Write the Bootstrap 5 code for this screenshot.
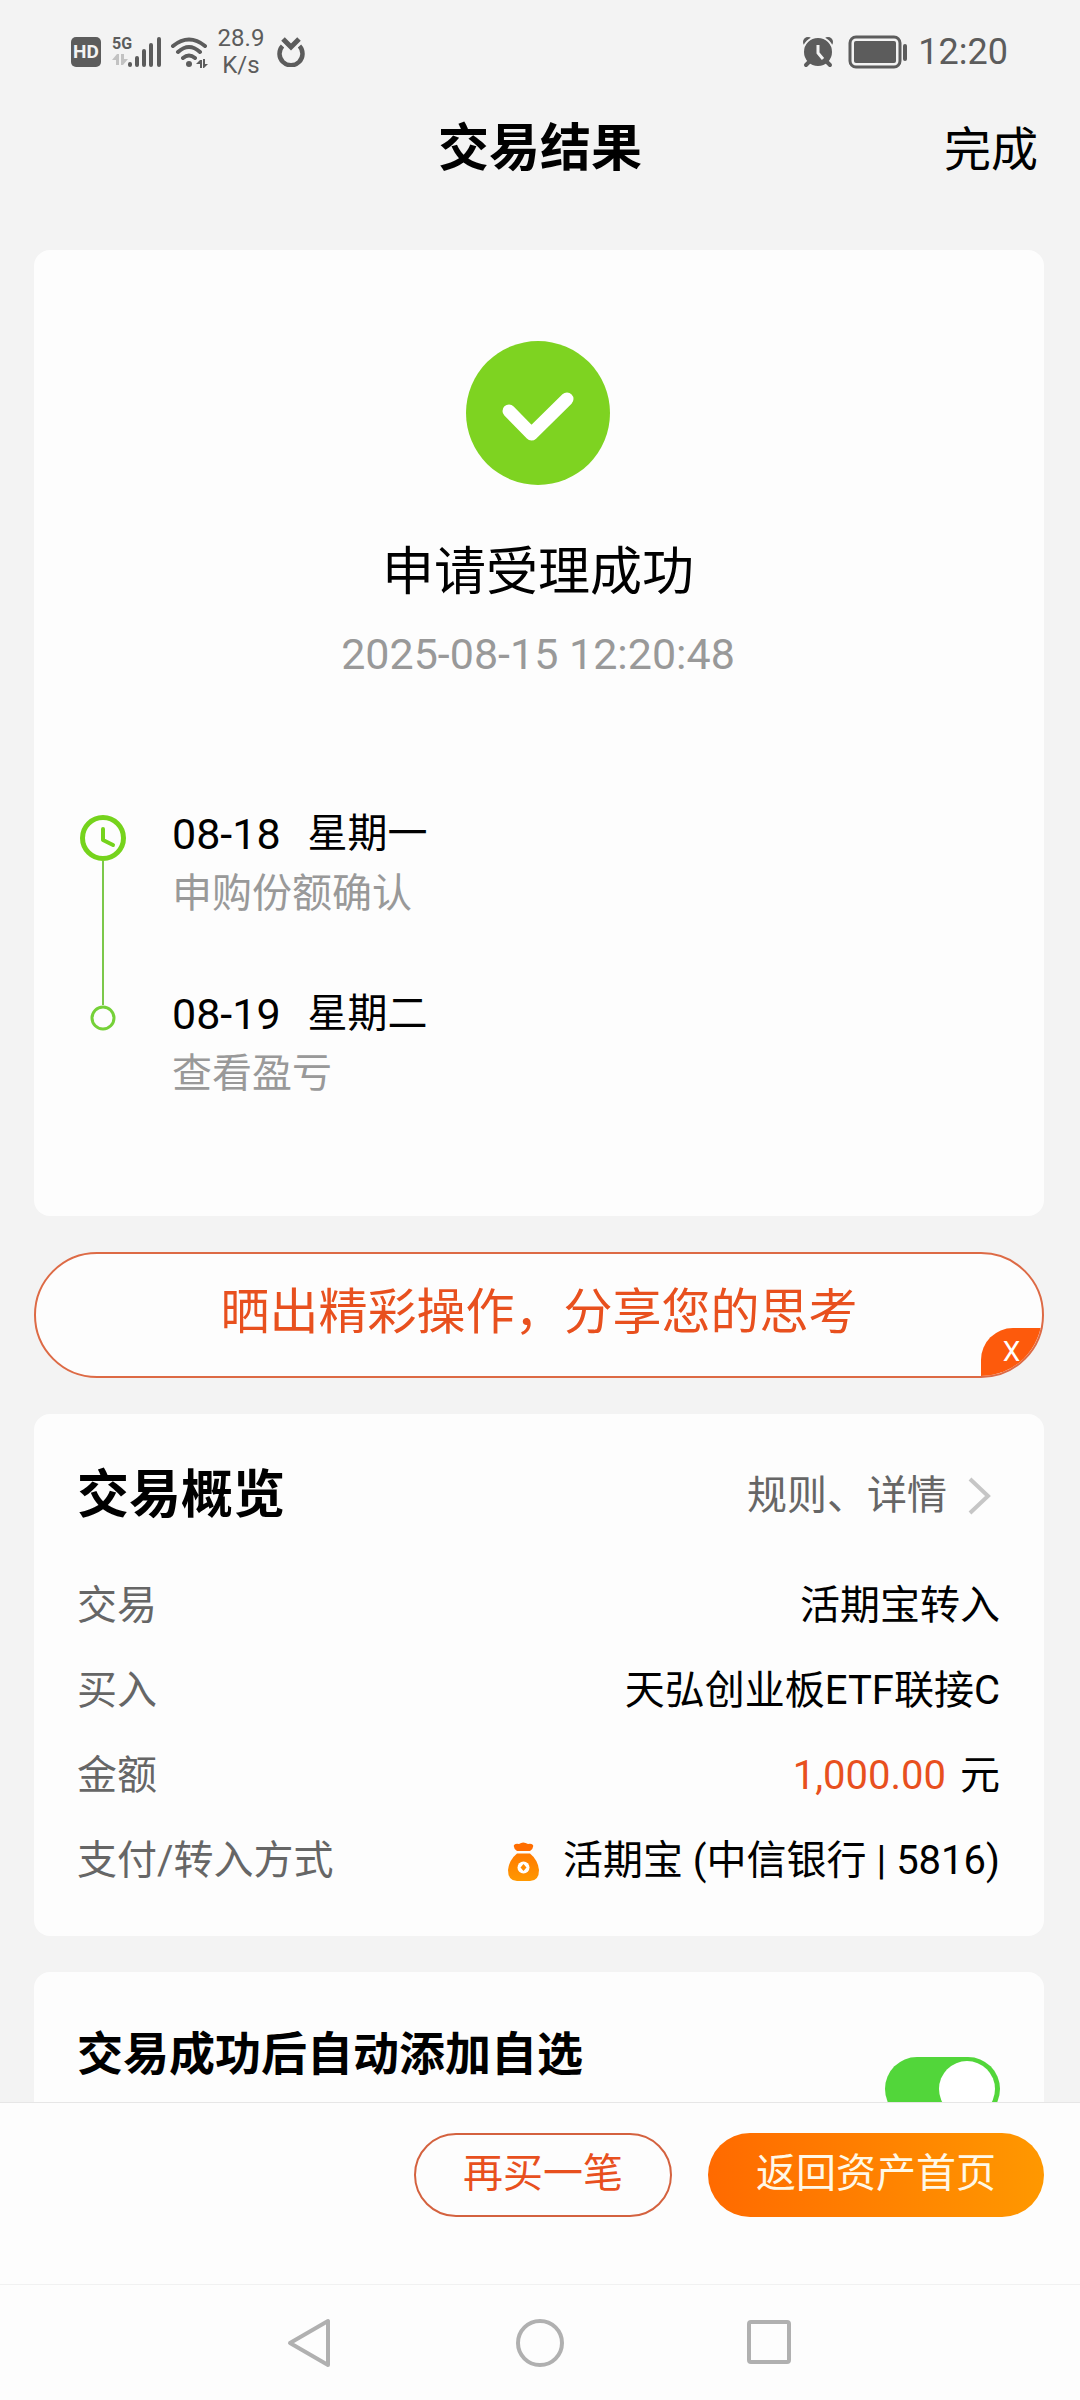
<!DOCTYPE html>
<html lang="zh-CN">
<head>
<meta charset="utf-8">
<meta name="viewport" content="width=device-width, initial-scale=1">
<title>交易结果</title>
<link href="https://cdn.jsdelivr.net/npm/bootstrap@5.3.0/dist/css/bootstrap.min.css" rel="stylesheet">
<style>
:root { --ink:#000; --grey:#666; --soft:#999; --status:#5c5c5c; --brand:#e8501e; --green:#7ed321; }
body { font-family: Roboto, "Noto Sans CJK SC", sans-serif; font-size:40px; line-height:60px; color:var(--ink); background:#f3f3f3; }
svg { display:block; flex:none; }
.app { height:100vh; }
.status-bar { height:104px; padding:0 72px 0 71px; color:var(--status); }
.hd-box { width:30px; height:30px; border-radius:5px; background:var(--status); color:#f3f3f3; font-size:19px; font-weight:700; line-height:30px; }
.signal { margin-left:11px; }
.net-box { width:16px; }
.net-gen { font-size:16px; line-height:16px; font-weight:700; white-space:nowrap; }
.speed { width:48px; font-size:24px; line-height:27px; margin:0 12px 0 9px; }
.clock-time { font-size:36px; line-height:40px; }
.top-bar { height:90px; padding:0 42px; margin-bottom:56px; }
.page-title { font-size:51px; font-weight:700; }
.btn-done { font-size:47px; line-height:60px; color:var(--ink); }
.scroll-area { padding:0 36px 0 34px; gap:36px; }
.panel { background:#fdfdfd; border-radius:16px; flex:none; }
.result-panel { padding:91px 48px 112px 46px; }
.result-title { font-size:52px; line-height:72px; margin-top:52px; }
.stamp { font-size:43px; color:var(--soft); margin-top:15px; }
.steps { margin-top:120px; }
.step { gap:46px; }
.step-first { height:180px; }
.rail { width:46px; }
.rail-first { padding-top:11px; }
.rail-line { width:2px; background:#7cc84a; }
.rail-stub { height:21px; }
.step-date { font-size:43px; margin-right:27px; }
.text-soft { color:var(--soft); }
.text-label { color:var(--grey); }
.text-brand { color:var(--brand); }
.share-bar { height:126px; border:2px solid #dd6a45; background:#fdfdfd; flex:none; border-radius:63px; }
.share-btn { font-size:49px; line-height:60px; padding:0 0 4px; }
.share-close { right:0; bottom:0; width:61px; height:48px; padding:0; border:0; border-radius:32px 0 0 0; background:#fd5a0c; color:#fff; font-size:28px; line-height:46px; }
.overview { padding:51px 44px 45px 43px; }
.overview-head { margin-bottom:49px; }
.section-title { font-size:52px; font-weight:700; line-height:62px; }
.detail-link { gap:21px; padding-right:9px; }
.rows { gap:25px; }
.bag-icon { margin-right:24px; }
.auto-add { padding:52px 44px 60px 43px; }
.auto-title { font-size:46px; font-weight:700; line-height:60px; }
.form-switch .form-check-input.auto-toggle { width:115px; height:64px; margin:33px 0 0; border:0; background-color:#52d63a; background-size:56px 56px; background-position:right 5px center; background-repeat:no-repeat;
  background-image:url("data:image/svg+xml,%3csvg xmlns='http://www.w3.org/2000/svg' viewBox='-4 -4 8 8'%3e%3ccircle r='4' fill='%23fff'/%3e%3c/svg%3e"); }
.action-bar { height:182px; padding:30px 36px 0; gap:36px; background:#fdfdfd; border-top:1px solid #e6e6e6; flex:none; }
.pill { height:84px; font-size:40px; line-height:60px; padding:0 48px 2px; border-radius:42px; }
.pill-outline { border:2px solid #d4623f; color:var(--brand); padding-left:47px; padding-right:47px; }
.pill-fill { border:0; color:#fff8e6; background:linear-gradient(90deg,#ff6a00,#ff9800); }
.nav-keys { height:116px; gap:183px; background:#fdfdfd; border-top:1px solid #f1f1f1; flex:none; }
.nav-keys .btn { padding:0; border:0; }
</style>
</head>
<body>
<div class="app d-flex flex-column overflow-hidden">
  <div class="status-bar d-flex align-items-center justify-content-between flex-shrink-0">
    <div class="d-flex align-items-center">
      <div class="hd-box text-center">HD</div>
      <div class="signal d-flex">
        <div class="net-box">
          <div class="net-gen">5G</div>
          <svg width="16" height="14" viewBox="0 0 16 14" fill="#c2c2c2"><path d="M0 8l5-6h2v11H4V8zM9 2h3v5h4l-5 6H9z"/></svg>
        </div>
        <svg width="34" height="32" viewBox="0 0 34 32" stroke="#5c5c5c" stroke-width="4" stroke-linecap="round"><path d="M2 28v1M9 22v7M16 15v14M23 9v20M31 3v26" /></svg>
      </div>
      <svg class="ms-2" width="38" height="32" viewBox="0 0 38 32" fill="none" stroke="#5c5c5c" stroke-width="4" stroke-linecap="round"><path d="M3 10Q19-3 35 10M8 16Q19 6 30 16M13 22Q19 17 25 22"/><circle cx="19" cy="28" r="3" fill="#5c5c5c" stroke="none"/><path d="M26 28l4-4h2v8h-2v-4zM33 23h2v5h3l-4 4h-1z" fill="#5c5c5c" stroke="none"/></svg>
      <div class="speed text-center">28.9 K/s</div>
      <svg width="28" height="30" viewBox="0 0 28 30" fill="none" stroke="#5c5c5c" stroke-width="4.500"><path d="M5.500 9A11.500 11.500 0 1 0 22.500 9"/><path d="M6 2l8 8 8-8" stroke-width="5"/></svg>
    </div>
    <div class="d-flex align-items-center">
      <svg width="32" height="32" viewBox="0 0 32 32"><g fill="#5c5c5c"><circle cx="6" cy="6" r="5"/><circle cx="26" cy="6" r="5"/></g><circle cx="16" cy="16" r="15" fill="#5c5c5c" stroke="#f3f3f3" stroke-width="2"/><path d="M16 9v8l5 6" fill="none" stroke="#f3f3f3" stroke-width="3"/><path d="M7 26l-3 3M25 26l3 3" stroke="#5c5c5c" stroke-width="4" stroke-linecap="round"/></svg>
      <svg class="mx-2" width="68" height="34" viewBox="-4 0 64 34"><rect x="2" y="2" width="50" height="30" rx="6" fill="none" stroke="#5c5c5c" stroke-width="3"/><rect x="6" y="6" width="42" height="22" rx="2" fill="#5c5c5c"/><rect x="55" y="9" width="4" height="17" rx="2" fill="#5c5c5c"/></svg>
      <div class="clock-time">12:20</div>
    </div>
  </div>

  <header class="top-bar flex-shrink-0">
    <div class="row g-0 h-100 align-items-center">
      <div class="col"></div>
      <h1 class="page-title col-auto mb-0">交易结果</h1>
      <div class="col text-end"><button type="button" class="btn btn-done p-0 border-0">完成</button></div>
    </div>
  </header>

  <main class="scroll-area d-flex flex-column flex-grow-1 overflow-hidden">
    <section class="panel result-panel">
      <div class="text-center">
        <svg class="mx-auto" width="144" height="144" viewBox="0 0 144 144"><circle cx="72" cy="72" r="72" fill="#7ed321"/><path d="M43 70l22.500 23L101 58" fill="none" stroke="#fff" stroke-width="13" stroke-linecap="round" stroke-linejoin="round"/></svg>
        <h2 class="result-title mb-0 fw-normal">申请受理成功</h2>
        <div class="stamp">2025-08-15 12:20:48</div>
      </div>
      <ol class="steps list-unstyled mb-0">
        <li class="step step-first d-flex">
          <div class="rail rail-first d-flex flex-column align-items-center">
            <svg width="46" height="46" viewBox="0 0 46 46" fill="none" stroke="#75d31c" stroke-width="5"><circle cx="23" cy="23" r="20.500"/><path d="M23 14v11l10 5" stroke-width="4" stroke-linecap="round" stroke-linejoin="round"/></svg>
            <div class="rail-line flex-grow-1"></div>
          </div>
          <div>
            <div class="d-flex"><span class="step-date">08-18</span><span>星期一</span></div>
            <div class="text-soft">申购份额确认</div>
          </div>
        </li>
        <li class="step d-flex">
          <div class="rail d-flex flex-column align-items-center">
            <div class="rail-line rail-stub"></div>
            <svg width="26" height="26" viewBox="0 0 26 26"><circle cx="13" cy="13" r="11" fill="none" stroke="#75d138" stroke-width="3"/></svg>
          </div>
          <div>
            <div class="d-flex"><span class="step-date">08-19</span><span>星期二</span></div>
            <div class="text-soft">查看盈亏</div>
          </div>
        </li>
      </ol>
    </section>

    <div class="share-bar position-relative overflow-hidden d-flex">
      <button type="button" class="btn share-btn text-brand border-0 flex-grow-1">晒出精彩操作，分享您的思考</button>
      <button type="button" class="share-close position-absolute" aria-label="关闭">X</button>
    </div>

    <section class="panel overview">
      <div class="overview-head d-flex justify-content-between align-items-center">
        <h2 class="section-title mb-0">交易概览</h2>
        <a href="#" class="detail-link d-flex align-items-center text-decoration-none text-label">规则、详情
          <svg width="23" height="38" viewBox="0 0 23 38" fill="none" stroke="#c6c6c6" stroke-width="4"><path d="M2 2l18 17L2 36"/></svg>
        </a>
      </div>
      <div class="rows d-flex flex-column">
        <div class="d-flex justify-content-between"><span class="text-label">交易</span><span>活期宝转入</span></div>
        <div class="d-flex justify-content-between"><span class="text-label">买入</span><span>天弘创业板ETF联接C</span></div>
        <div class="d-flex justify-content-between"><span class="text-label">金额</span><span><span class="text-brand me-1">1,000.00</span> 元</span></div>
        <div class="d-flex justify-content-between"><span class="text-label">支付/转入方式</span>
          <span class="d-flex align-items-center">
            <svg class="bag-icon" width="31" height="39" viewBox="0 0 31 39"><defs><linearGradient id="bag" x1="0" y1="0" x2="0" y2="1"><stop offset="0" stop-color="#ff7a00"/><stop offset="1" stop-color="#ff9800"/></linearGradient></defs><path d="M9 9Q5 6 6 3Q8 1 11 2Q15-1 20 2Q23 1 25 3Q26 6 22 9z" fill="#ff6d00"/><path d="M9 11.500H22Q30 18 31 28Q31 39 22 39H9Q0 39 0 28Q1 18 9 11.500z" fill="url(#bag)"/><circle cx="15.500" cy="25.500" r="6" fill="#fff"/><path d="M15.500 22l3 3.500-3 3.500-3-3.500z" fill="#ff8a00"/></svg>
            <span>活期宝 (中信银行 | 5816)</span>
          </span>
        </div>
      </div>
    </section>

    <section class="panel auto-add">
      <div class="form-switch d-flex justify-content-between align-items-start p-0">
        <label class="auto-title" for="autoAdd">交易成功后自动添加自选</label>
        <input class="form-check-input auto-toggle float-none" type="checkbox" role="switch" id="autoAdd" checked>
      </div>
    </section>
  </main>

  <div class="action-bar d-flex justify-content-end align-items-start">
    <button type="button" class="btn pill pill-outline">再买一笔</button>
    <button type="button" class="btn pill pill-fill">返回资产首页</button>
  </div>
  <nav class="nav-keys d-flex justify-content-center align-items-center" aria-label="系统导航">
    <button type="button" class="btn" aria-label="返回"><svg width="46" height="50" viewBox="0 0 46 50" fill="none" stroke="#b0b0b0" stroke-width="4" stroke-linejoin="round"><path d="M41 3v44L3 25z"/></svg></button>
    <button type="button" class="btn" aria-label="主页"><svg width="48" height="48" viewBox="0 0 48 48" fill="none" stroke="#b0b0b0" stroke-width="4"><circle cx="24" cy="24" r="22"/></svg></button>
    <button type="button" class="btn" aria-label="最近任务"><svg width="46" height="46" viewBox="0 0 46 46" fill="none" stroke="#b0b0b0" stroke-width="4"><rect x="2" y="2" width="40" height="40" rx="2"/></svg></button>
  </nav>
</div>
<script src="https://cdn.jsdelivr.net/npm/bootstrap@5.3.0/dist/js/bootstrap.bundle.min.js"></script>
</body>
</html>
